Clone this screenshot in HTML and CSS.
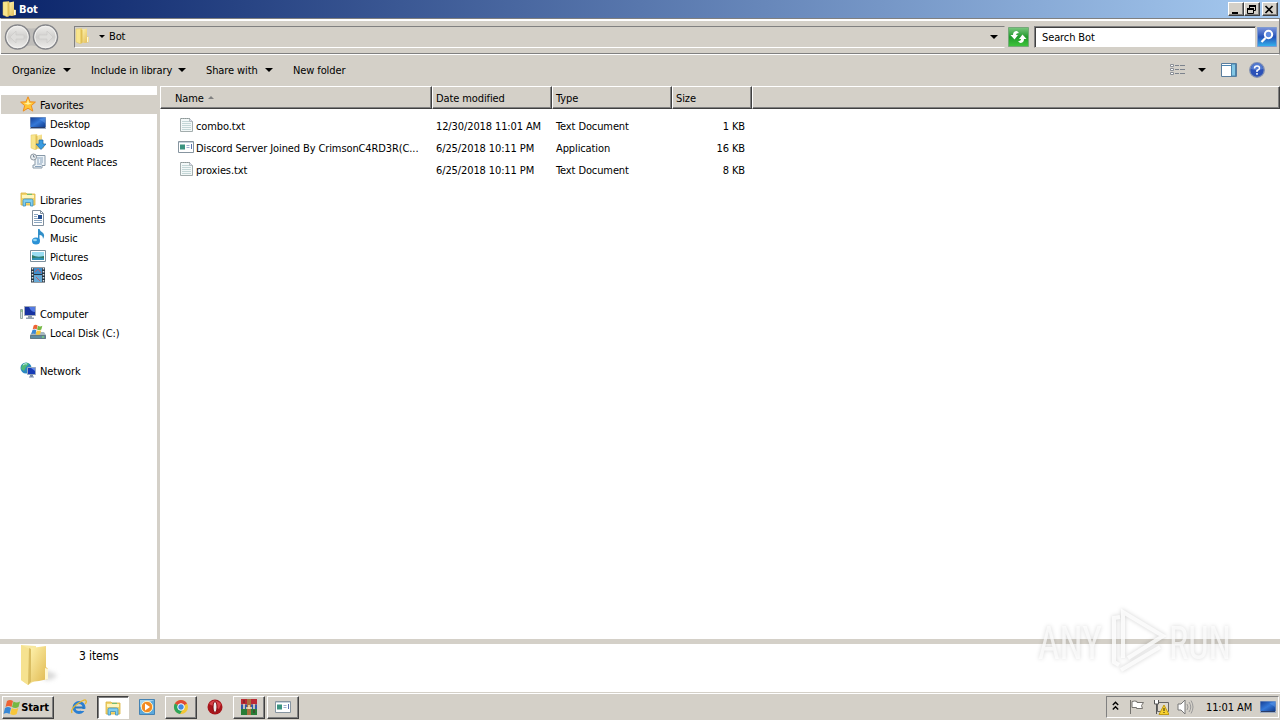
FILE: index.html
```
<!DOCTYPE html>
<html lang="en">
<head>
    <meta charset="UTF-8">
    <meta name="viewport" content="width=device-width, initial-scale=1.0">
    <title>Bot</title>
    <link rel="stylesheet" href="styles.css">
</head>
<body>

<!-- icons that are used more than once -->
<svg class="sprites" width="0" height="0">
    <defs>
        <linearGradient id="gold" x1="0" x2="1" y1="0" y2="1"><stop offset="0" stop-color="#fff3ae"/><stop offset="1" stop-color="#dfb74e"/></linearGradient>
        <linearGradient id="blue" x1="0" x2="1" y1="0" y2="1"><stop offset="0" stop-color="#163f94"/><stop offset=".5" stop-color="#3478d8"/><stop offset="1" stop-color="#123c8c"/></linearGradient>
        <linearGradient id="silver" x1="0" x2="0" y1="0" y2="1"><stop offset="0" stop-color="#f0efed"/><stop offset=".5" stop-color="#d0cfcd"/><stop offset="1" stop-color="#efeeec"/></linearGradient>
        <linearGradient id="lens" x1="0" x2="0" y1="0" y2="1"><stop offset="0" stop-color="#7d95da"/><stop offset=".5" stop-color="#2452b8"/><stop offset="1" stop-color="#35b4ee"/></linearGradient>
        <linearGradient id="green" x1="0" x2="0" y1="0" y2="1"><stop offset="0" stop-color="#7cc780"/><stop offset=".5" stop-color="#219a2c"/><stop offset="1" stop-color="#3fc63c"/></linearGradient>
    </defs>
    <symbol id="folder" viewBox="0 0 16 16">
        <path d="M1 1l6-.5V15l-2 .7L1 14z" fill="#f8e58d" stroke="#e0c463" stroke-width=".5"/>
        <path d="M7 1.500l5-1v8l2 .5V14l-4 1-3-.500z" fill="url(#gold)"/>
        <path d="M5.500 1l2 1v12.500l-2 1z" fill="#e0bf55"/>
        <path d="M12 9h1.500v5H12z" fill="#fff8d5"/>
    </symbol>
    <symbol id="explorer" viewBox="0 0 16 16">
        <path d="M1 2h5l1 1h8v11H1z" fill="#f1d36d" stroke="#d9b23e" stroke-width=".8"/>
        <path d="M2 4h12v3H2z" fill="#fff6bc"/>
        <path d="M7 3.300h5" stroke="#5bb878"/>
        <path d="M3 15V9.500Q3 8 4.500 8h7Q13 8 13 9.500V15h-2.500v-3.500h-5V15z" fill="#7fcdf0" stroke="#3e91bd" stroke-width=".8"/>
    </symbol>
    <symbol id="text" viewBox="0 0 16 16">
        <path d="M2.500 1.500h9l3 3v10h-12z" fill="#f3f8f8" stroke="#a3adad"/>
        <path d="M3 1.500h9" stroke="#8d9797" stroke-dasharray="1 1"/>
        <path d="M11.500 1.500v3h3" fill="#dde" stroke="#9faaaa" stroke-width=".7"/>
        <path d="M4 4.500h7M4 6.500h9M4 8.500h9M4 10.500h9M4 12.500h9" stroke="#c3d6d6"/>
    </symbol>
    <symbol id="app" viewBox="0 0 16 16">
        <path d="M.5 2.500h15v11H.5z" fill="#fff" stroke="#8795a0"/>
        <path d="M1 3h14v1H1z" fill="#c7d3de"/>
        <path d="M2 5.500h5v5H2z" fill="#3b9380"/>
        <path d="M8.500 6.500h3M8.500 8.500h3" stroke="#9dafd0"/>
        <path d="M13.500 5v5" stroke="#5671ad"/>
    </symbol>
    <symbol id="desktop" viewBox="0 0 16 16">
        <path d="M0 2h16v12H0z" fill="#9cabc1"/>
        <path d="M.5 2.500h15v9.500H.5z" fill="url(#blue)"/>
        <path d="M1 12.500h14" stroke="#293c68"/>
        <path d="M9 4l6-1v5z" fill="#5f9be9" opacity=".5"/>
    </symbol>
    <symbol id="windows" viewBox="0 0 18 16">
        <path d="M4 2q3-2 6 0L8.500 8Q5.500 6 2.500 8z" fill="#ee6334"/>
        <path d="M10.500 2.500q3 2 6.500 0L15.500 8q-3 2-6.500 0z" fill="#75b843"/>
        <path d="M2 9q3-2 6 0l-1.500 6q-3-2-6 0z" fill="#3988d5"/>
        <path d="M8.800 9q3 2 6.500 0l-1.600 6q-3 2-6.500 0z" fill="#f7c63b"/>
    </symbol>
</svg>

<div class="window">
    <header class="title-bar">
        <svg class="icon"><use href="#folder"/></svg>
        <span class="title">Bot</span>
        <div class="caption-buttons">
            <button class="caption"><svg width="12" height="11"><path d="M3 9h6" stroke="#000" stroke-width="2"/></svg></button>
            <button class="caption"><svg width="12" height="11"><path d="M4.500 4V1.500h6v5H9M2.500 4.500h6v5h-6z" fill="none" stroke="#000"/><path d="M4 2h7M2 5h7" stroke="#000" stroke-width="2"/></svg></button>
            <button class="caption close"><svg width="12" height="11"><path d="M2.500 2l7 7M9.500 2l-7 7" stroke="#000" stroke-width="1.700"/></svg></button>
        </div>
    </header>

    <div class="nav-bar">
        <svg class="travel" width="60" height="30" viewBox="0 0 60 30">
            <path d="M17 4q13 5 28 0v22q-15-5-28 0z" fill="#bfbdba"/>
            <g fill="url(#silver)" stroke="#85868a" stroke-width="1.500">
                <circle cx="16.500" cy="15" r="12"/>
                <circle cx="44.500" cy="15" r="12"/>
            </g>
            <g fill="none" stroke="#f4f3f1">
                <circle cx="16.500" cy="15" r="10.700"/>
                <circle cx="44.500" cy="15" r="10.700"/>
            </g>
            <g fill="#dedddb" stroke="#cbcac8" stroke-width=".7">
                <path d="M9 15l6-6v4h8v4h-8v4z"/>
                <path d="M52 15l-6-6v4h-8v4h8v4z"/>
            </g>
        </svg>
        <div class="address">
            <svg class="icon"><use href="#folder"/></svg>
            <i class="arrow small"></i>
            <span>Bot</span>
            <i class="arrow address-arrow"></i>
        </div>
        <svg class="refresh" width="21" height="20" viewBox="0 0 21 20">
            <path d="M.5.500h20v19H.5z" fill="url(#green)" stroke="#75a879"/>
            <path d="M9 4Q5 4 5 8H2.500l4 4.500L10 8H8q0-2 3-2zM12 16q4 0 4-4h2.500l-4-4.500L11 12h2q0 2-3 2z" fill="#fff"/>
        </svg>
        <div class="search">Search Bot</div>
        <svg class="search-button" width="20" height="20" viewBox="0 0 20 20">
            <path d="M.5.500h19v19H.5z" fill="url(#lens)" stroke="#7f9bd0"/>
            <circle cx="11.500" cy="7.500" r="3.700" fill="#5f8be0" stroke="#fff" stroke-width="2"/>
            <path d="M8.500 11L4.500 15" stroke="#fff" stroke-width="2.300"/>
        </svg>
    </div>

    <div class="toolbar">
        <span class="organize">Organize</span><i class="arrow"></i>
        <span class="include">Include in library</span><i class="arrow"></i>
        <span class="share">Share with</span><i class="arrow"></i>
        <span class="new-folder">New folder</span>
        <div class="view-tools">
            <svg width="16" height="14" viewBox="0 0 16 14">
                <path d="M.5 1.500h3v2h-3zM.5 5.500h3v2h-3zM.5 9.500h3v2h-3z" fill="#fff" stroke="#8b8f96"/>
                <path d="M5 2.500h4m1 0h5M5 6.500h4m1 0h5M5 10.500h4m1 0h5" stroke="#7c838d"/>
            </svg>
            <i class="arrow"></i>
            <svg class="preview" width="16" height="14" viewBox="0 0 16 14">
                <path d="M.5.500h15v13H.5z" fill="#fff" stroke="#587c9d"/>
                <path d="M1 2.500h9" stroke="#4d86b3"/><path d="M10.500 1h4v12h-4z" fill="#83c7e5" stroke="#4c84ab"/>
            </svg>
            <svg class="help" width="16" height="16" viewBox="0 0 16 16">
                <circle cx="8" cy="8" r="7.300" fill="#2b51b8" stroke="#8392b4" stroke-width="1.300"/>
                <path d="M2 7a6 6 0 0 1 12 0q-6 2-12 0z" fill="#5279cf"/>
                <path d="M5.500 6.500q0-2.500 2.500-2.500t2.500 2.200Q10.500 7.500 8 8.500V10m0 1v1.700" fill="none" stroke="#fff" stroke-width="1.500"/>
            </svg>
        </div>
    </div>

    <main class="content">
        <nav class="sidebar">
            <div class="item root selected">
                <svg class="icon" viewBox="0 0 16 16"><path d="M8 .8l2.100 5 5.300.3-4.100 3.500 1.500 5.500L8 12.200l-4.800 2.900 1.500-5.500L.6 6.100l5.300-.3z" fill="#ffc637" stroke="#ed8d22"/><path d="M8 3l1 4 3 .2-4 1.500-4-1.500L7 7z" fill="#fff3a4"/></svg>
                <span>Favorites</span>
            </div>
            <div class="item"><svg class="icon"><use href="#desktop"/></svg><span>Desktop</span></div>
            <div class="item">
                <svg class="icon" viewBox="0 0 16 16"><use href="#folder" width="16" height="16"/><path d="M9 6h4v4h3l-5 5.500L6 10h3z" fill="#399be0" stroke="#1e68a8" stroke-width=".7"/></svg>
                <span>Downloads</span>
            </div>
            <div class="item">
                <svg class="icon" viewBox="0 0 16 16"><path d="M5 2.500h10v10h-3v2.500H3V12h2z" fill="#edf3f7" stroke="#8899a8"/><path d="M7 5h6M7 7h2m1 0h3M7 9h2m1 0h3M7 11h5M5 13.500h6" stroke="#8aa3bc"/><circle cx="3.500" cy="4" r="3" fill="#e9edf0" stroke="#8c969f"/><path d="M3.500 2v2H5" fill="none" stroke="#53677c" stroke-width=".7"/></svg>
                <span>Recent Places</span>
            </div>
            <div class="item root group"><svg class="icon"><use href="#explorer"/></svg><span>Libraries</span></div>
            <div class="item">
                <svg class="icon" viewBox="0 0 16 16"><path d="M2.500.5h8l3 3v12h-11z" fill="#fff" stroke="#82909e"/><path d="M10.500.5v3h3" fill="none" stroke="#82909e"/><path d="M4 4.500h4M4 6.500h3M4 8.500h4M4 10.500h8M4 12.500h8" stroke="#8ba5bf"/><path d="M8 5h4v4H8z" fill="#244f91"/></svg>
                <span>Documents</span>
            </div>
            <div class="item">
                <svg class="icon" viewBox="0 0 16 16"><path d="M8 0h1.500q.5 2 3 3.500 3 2.500.5 6.500 0-4-3.500-4v6H8z" fill="#328fc8"/><ellipse cx="6" cy="12" rx="4" ry="3.500" fill="#2a91d6"/><ellipse cx="5" cy="11" rx="2" ry="1.300" fill="#92d5f2"/></svg>
                <span>Music</span>
            </div>
            <div class="item">
                <svg class="icon" viewBox="0 0 16 16"><path d="M.5 2.500h15v11H.5z" fill="#fff" stroke="#7d909d"/><path d="M2 4h12v8H2z" fill="#9addf2"/><path d="M2 7q5 3 12 1v4H2z" fill="#307b66"/><path d="M2 10.500q6-2 12 0V12H2z" fill="#2f91b6"/></svg>
                <span>Pictures</span>
            </div>
            <div class="item">
                <svg class="icon" viewBox="0 0 16 16"><path d="M1 .5h14v15H1z" fill="#263541"/><path d="M4 1h8v6H4z" fill="#428ecb"/><path d="M4 8h8v7H4z" fill="#65a9d6"/><path d="M5 5l3-3 3 4M6 10l4 4" stroke="#b6606b" fill="none"/><path d="M2.500 1v14M13.500 1v14" stroke="#e1e6eb" stroke-width="1.500" stroke-dasharray="1.500 1.500"/></svg>
                <span>Videos</span>
            </div>
            <div class="item root group">
                <svg class="icon" viewBox="0 0 16 16"><path d="M.5 4.500h2v9h-2z" fill="#d8e4e0" stroke="#96a8a5"/><path d="M1 6h1.500" stroke="#56b451"/><path d="M4.500 1.500h11v9h-11z" fill="#1733a1" stroke="#a0a9b9"/><path d="M9 2h6v5q-4 0-6-5z" fill="#5279e3"/><path d="M8 11h4v2H8zM6 12.500h8V14H6z" fill="#92a0af"/></svg>
                <span>Computer</span>
            </div>
            <div class="item">
                <svg class="icon" viewBox="0 0 16 16"><path d="M2 8h12l2 3v4H0v-4z" fill="#a6b7bf"/><path d="M.5 11.500h15v3H.5z" fill="#5d8ca2" stroke="#627b86"/><use href="#windows" x="1" y="0" width="12" height="11"/><path d="M12 13h2" stroke="#8df063"/></svg>
                <span>Local Disk (C:)</span>
            </div>
            <div class="item root group">
                <svg class="icon" viewBox="0 0 16 16"><circle cx="6" cy="6" r="5.500" fill="#2a88c0"/><path d="M2 3q4-4 7-1L6 5 4 9 1 7z" fill="#4fb978"/><path d="M3 3q2-2 4-1" stroke="#c6edf1" fill="none"/><path d="M7.500 5.500h8v7h-8z" fill="#173bb6" stroke="#9aa9c0"/><path d="M11 6h4v3z" fill="#668ce9"/><path d="M10.500 13h2v1.500h-2zM9 15h5" fill="#7789a8" stroke="#7789a8"/></svg>
                <span>Network</span>
            </div>
        </nav>

        <section class="files">
            <div class="row columns">
                <div class="col name">Name <i class="sort"></i></div>
                <div class="col">Date modified</div>
                <div class="col">Type</div>
                <div class="col">Size</div>
                <div class="col"></div>
            </div>
            <div class="row file">
                <div class="cell name"><svg class="icon"><use href="#text"/></svg><span>combo.txt</span></div>
                <div class="cell">12/30/2018 11:01 AM</div>
                <div class="cell type">Text Document</div>
                <div class="cell size">1 KB</div>
            </div>
            <div class="row file">
                <div class="cell name"><svg class="icon"><use href="#app"/></svg><span>Discord Server Joined By CrimsonC4RD3R(C...</span></div>
                <div class="cell">6/25/2018 10:11 PM</div>
                <div class="cell type">Application</div>
                <div class="cell size">16 KB</div>
            </div>
            <div class="row file">
                <div class="cell name"><svg class="icon"><use href="#text"/></svg><span>proxies.txt</span></div>
                <div class="cell">6/25/2018 10:11 PM</div>
                <div class="cell type">Text Document</div>
                <div class="cell size">8 KB</div>
            </div>
        </section>
    </main>

    <footer class="details">
        <svg width="42" height="44" viewBox="0 0 42 44">
            <path class="shadow" d="M24 36V26q6 1 13 5-2 4-8 5z"/>
            <path d="M1 1l15 1v34l-8 5-7-5z" fill="#f7e8a0"/>
            <path d="M11 4l15-2v21l2 2v10l-9 2-9 1z" fill="url(#gold)"/>
            <path d="M1 1l9 4v34l-2 2-7-5z" fill="#f6e290"/>
            <path d="M9 4l2 1v33l-3 3z" fill="#d9bd62"/>
            <path d="M25 24l3 1v10l-3 1z" fill="#fff7d3"/>
        </svg>
        <span>3 items</span>
    </footer>
</div>

<div class="taskbar">
    <button class="start"><svg width="18" height="16"><use href="#windows"/></svg><b>Start</b></button>
    <div class="task flat">
        <svg class="icon" viewBox="0 0 16 16"><circle cx="8" cy="8.500" r="5" fill="none" stroke="#2a7fd2" stroke-width="3"/><path d="M4 8.500h9" stroke="#2877be" stroke-width="2"/><path d="M10 11h5" stroke="#d4d0c8" stroke-width="2"/><path d="M1 14Q-1 10 7 4.500T15 2q1 1-1 3" fill="none" stroke="#e7b72e" stroke-width="1.300"/></svg>
    </div>
    <div class="task pressed"><svg class="icon"><use href="#explorer"/></svg></div>
    <div class="task flat">
        <svg class="icon" viewBox="0 0 16 16"><path d="M.5.500h15v15H.5z" fill="#5ca9dc" stroke="#4583b3"/><path d="M1 1h14L1 8z" fill="#a5d3ed"/><circle cx="8" cy="8" r="5.700" fill="#f28a20" stroke="#fff2c9"/><path d="M6 4.500l5 3.500-5 3.500z" fill="#fff"/></svg>
    </div>
    <div class="task">
        <svg class="icon" viewBox="0 0 16 16"><circle cx="8" cy="8" r="7" fill="#f3c735"/><path d="M8 8L1.900 4.500A7 7 0 0 1 14 4.500z" fill="#df4a37"/><path d="M8 8L1.900 4.500A7 7 0 0 0 7 15l3-5z" fill="#2ca45a"/><circle cx="8" cy="8" r="3.300" fill="#4189e1" stroke="#fff"/></svg>
    </div>
    <div class="task flat">
        <svg class="icon" viewBox="0 0 16 16"><circle cx="8" cy="8" r="7.500" fill="#a8151b"/><path d="M2 5q5-7 12 0l-2 5z" fill="#d8444a"/><ellipse cx="8" cy="8" rx="2" ry="5.500" fill="#eee" stroke="#82090d"/></svg>
    </div>
    <div class="task">
        <svg class="icon" viewBox="0 0 16 16"><path d="M0 0h16v5.500H0z" fill="#bb2934"/><path d="M0 5.500h16V10H0z" fill="#3158a7"/><path d="M0 10h16v6H0z" fill="#287d36"/><path d="M6 0h4v16H6z" fill="#a9703e"/><path d="M3 5v5M13 5v5M5 9h6M8 6v4" stroke="#f2e5bd" stroke-width="1.500"/><path d="M3 1v3M13 11v3" stroke="#522"/></svg>
    </div>
    <div class="task"><svg class="icon"><use href="#app"/></svg></div>

    <div class="tray">
        <svg class="chevrons" width="7" height="10"><path d="M.8 4l2.700-2.700L6.200 4M.8 8.500l2.700-2.700 2.700 2.700" fill="none" stroke="#000" stroke-width="1.400"/></svg>
        <svg class="flag" width="16" height="16"><path d="M1.500 1v14M3 2.500q3-1 5 0v1h6.500l-2 3 1 3H7.500v-1H3z" fill="#fff" stroke="#75736f"/></svg>
        <svg class="net" width="16" height="16"><path d="M4.500 3.500h11v9h-11z" fill="#ded9ce" stroke="#666"/><path d="M1.500 1v4h4V1M3.500 5v10" stroke="#555" fill="#fff"/><path d="M11 6l5 9.500H6z" fill="#f7d12f" stroke="#c09a12"/><path d="M11 9v3m0 1v1" stroke="#302810"/></svg>
        <svg class="sound" width="17" height="16"><path d="M1 5h3l4-4v14l-4-4H1z" fill="#fff" stroke="#777"/><path d="M10 5q2 3 0 6M12 3q3.500 5 0 10M14 1.500q4 6.500 0 13" fill="none" stroke="#999"/></svg>
        <span class="clock">11:01 AM</span>
        <svg class="show-desktop" width="16" height="16"><use href="#desktop"/></svg>
    </div>
</div>

<svg class="watermark" width="230" height="90" viewBox="0 0 230 90">
    <g class="mark">
        <text x="6" y="55" textLength="64" lengthAdjust="spacingAndGlyphs">ANY</text>
        <text x="137" y="55" textLength="62" lengthAdjust="spacingAndGlyphs">RUN</text>
        <path d="M88 13l-6 1v44l5 3M91 54V8l40 24-35 22M89 66l39-23"/>
    </g>
</svg>

</body>
</html>
```
FILE: styles.css
```
* {
    box-sizing: border-box;
}

body {
    margin: 0;
    width: 1280px;
    height: 720px;
    overflow: hidden;
    display: flex;
    flex-direction: column;
    font-family: "DejaVu Sans Condensed", "DejaVu Sans", sans-serif;
    font-stretch: condensed;
    font-size: 11px;
    letter-spacing: -0.11px;
    color: #000;
    background-color: #d4d0c8;
    white-space: nowrap;
}

button {
    font: inherit;
    color: inherit;
    letter-spacing: inherit;
    padding: 0;
}

svg {
    display: block;
    flex: none;
}

.sprites {
    position: absolute;
}

.icon {
    width: 16px;
    height: 16px;
}

.arrow {
    flex: none;
    width: 0;
    height: 0;
    border: 4px solid transparent;
    border-top-color: #000;
    border-bottom: 0;
}

.arrow.small {
    border-width: 3px 3px 0;
}

.window {
    height: 692px;
    display: flex;
    flex-direction: column;
}

/* Title bar */
.title-bar {
    height: 18px;
    display: flex;
    align-items: center;
    padding: 0 2px;
    background: linear-gradient(to right, #0a246a, #a6caf0);
}

.title {
    margin-left: 1px;
    color: #fff;
    font-weight: bold;
}

.caption-buttons {
    display: flex;
    margin-left: auto;
}

.caption {
    width: 16px;
    height: 14px;
    background-color: #d4d0c8;
    border: 1px solid;
    border-color: #fff #404040 #404040 #fff;
    box-shadow: inset -1px -1px #808080;
}

.caption.close {
    margin-left: 2px;
}

/* Address and search */
.nav-bar {
    height: 37px;
    display: flex;
    align-items: center;
    padding-right: 2px;
    border: 1px solid #808080;
    border-left-color: #fff;
    border-bottom-color: #fff;
    box-shadow: inset 0 2px #fff, inset 0 -1px #808080;
}

.address {
    display: flex;
    align-items: center;
    width: 931px;
    height: 22px;
    margin-left: 13px;
    border: 1px solid;
    border-color: #808080 #d4d0c8 #fff #808080;
}

.address .icon {
    margin-top: -2px;
}

.address .small {
    margin: 0 4px 0 8px;
}

.address-arrow {
    margin: 1px 6px 0 auto;
}

.refresh {
    margin-left: 3px;
}

.search {
    width: 222px;
    height: 22px;
    margin-left: 5px;
    padding: 4px 7px 0;
    background-color: #fff;
    border: 1px solid;
    border-color: #808080 #d4d0c8 #d4d0c8 #808080;
    box-shadow: inset 1px 1px #404040;
}

.search-button {
    margin-left: 1px;
}

/* Command bar */
.toolbar {
    height: 31px;
    display: flex;
    align-items: center;
    padding: 0 15px 1px 12px;
}

.toolbar .organize {
    width: 51px;
}

.toolbar .include {
    width: 87px;
    margin-left: 20px;
}

.toolbar .share {
    width: 59px;
    margin-left: 20px;
}

.toolbar .new-folder {
    margin-left: 20px;
}

.view-tools {
    display: flex;
    align-items: center;
    margin-left: auto;
}

.view-tools .arrow {
    margin: 0 15px 0 12px;
}

.help {
    margin-left: 12px;
}

/* Folder tree and file list */
.content {
    height: 553px;
    display: flex;
}

.sidebar {
    width: 160px;
    padding-top: 9px;
    background-color: #fff;
    border-right: 3px solid #d4d0c8;
}

.item {
    height: 19px;
    display: flex;
    align-items: center;
    gap: 4px;
    padding-left: 30px;
}

.item span {
    padding-top: 2px;
}

.item .icon {
    margin-top: -1px;
}

.item.root {
    padding-left: 20px;
}

.item.group {
    margin-top: 19px;
}

.item.selected {
    margin-left: 1px;
    padding-left: 19px;
    background-color: #d4d0c8;
}

.files {
    flex: 1;
    background-color: #fff;
}

.row {
    display: grid;
    grid-template-columns: 272px 120px 120px 80px 1fr;
}

.columns {
    height: 23px;
    margin-bottom: 6px;
    background-color: #d4d0c8;
}

.col {
    display: flex;
    align-items: center;
    padding-left: 3px;
    padding-top: 1px;
    border: 1px solid;
    border-color: #fff #404040 #404040 #fff;
    box-shadow: inset -1px -1px #808080;
}

.col.name {
    padding-left: 14px;
}

.sort {
    margin: -2px 0 0 4px;
    border: 3px solid transparent;
    border-bottom-color: #808080;
    border-top: 0;
}

.file {
    height: 22px;
    align-items: center;
}

.cell {
    padding-left: 4px;
}

.cell.name {
    display: flex;
    align-items: center;
    gap: 2px;
    padding-left: 18px;
}

.cell .icon {
    margin-top: -2px;
}

.cell.size {
    padding-right: 7px;
    text-align: right;
}

/* Details pane */
.details {
    height: 53px;
    display: flex;
    padding: 0 20px;
    background-color: #fff;
    border-top: 5px solid #d4d0c8;
}

.details span {
    margin: 5px 0 0 17px;
    font-size: 12px;
}

.shadow {
    fill: #d9d9d9;
    filter: blur(2px);
}

/* Taskbar */
.taskbar {
    height: 28px;
    display: flex;
    padding: 2px 1px 1px 2px;
    border-top: 1px solid #d4d0c8;
    box-shadow: inset 0 1px #fff;
}

.start,
.task {
    height: 23px;
    margin-top: 1px;
    display: flex;
    align-items: center;
    justify-content: center;
    background-color: #d4d0c8;
    border: 1px solid;
    border-color: #fff #404040 #404040 #fff;
    box-shadow: inset -1px -1px #808080;
}

.start {
    width: 52px;
    margin-right: 9px;
    padding-right: 4px;
    padding-bottom: 1px;
}

.task {
    width: 32px;
    margin-right: 2px;
    padding-bottom: 1px;
}

.task.flat {
    border-color: transparent;
    box-shadow: none;
}

.task.pressed {
    padding: 1px 1px 0 0;
    background-color: #fff;
    border-color: #404040 #fff #fff #404040;
    box-shadow: inset 1px 1px #808080;
}

.tray {
    display: flex;
    align-items: center;
    width: 173px;
    height: 22px;
    margin: 1px 0 0 auto;
    padding-left: 5px;
    border: 1px solid;
    border-color: #808080 #fff #fff #808080;
}

.chevrons {
    margin-top: -2px;
}

.flag {
    margin-left: 10px;
}

.net,
.sound {
    margin-left: 8px;
}

.clock {
    width: 47px;
    margin-left: 12px;
}

.show-desktop {
    margin-left: 7px;
}

.watermark {
    position: absolute;
    left: 1032px;
    top: 604px;
}

.mark {
    fill: #fff;
    fill-opacity: 0.7;
    filter: drop-shadow(0 0 2px rgba(0, 0, 0, 0.22));
    font-family: Roboto, sans-serif;
    font-size: 46px;
    letter-spacing: 0;
}

.mark path {
    fill: none;
    stroke: #fff;
    stroke-opacity: 0.8;
    stroke-width: 4px;
}
```
